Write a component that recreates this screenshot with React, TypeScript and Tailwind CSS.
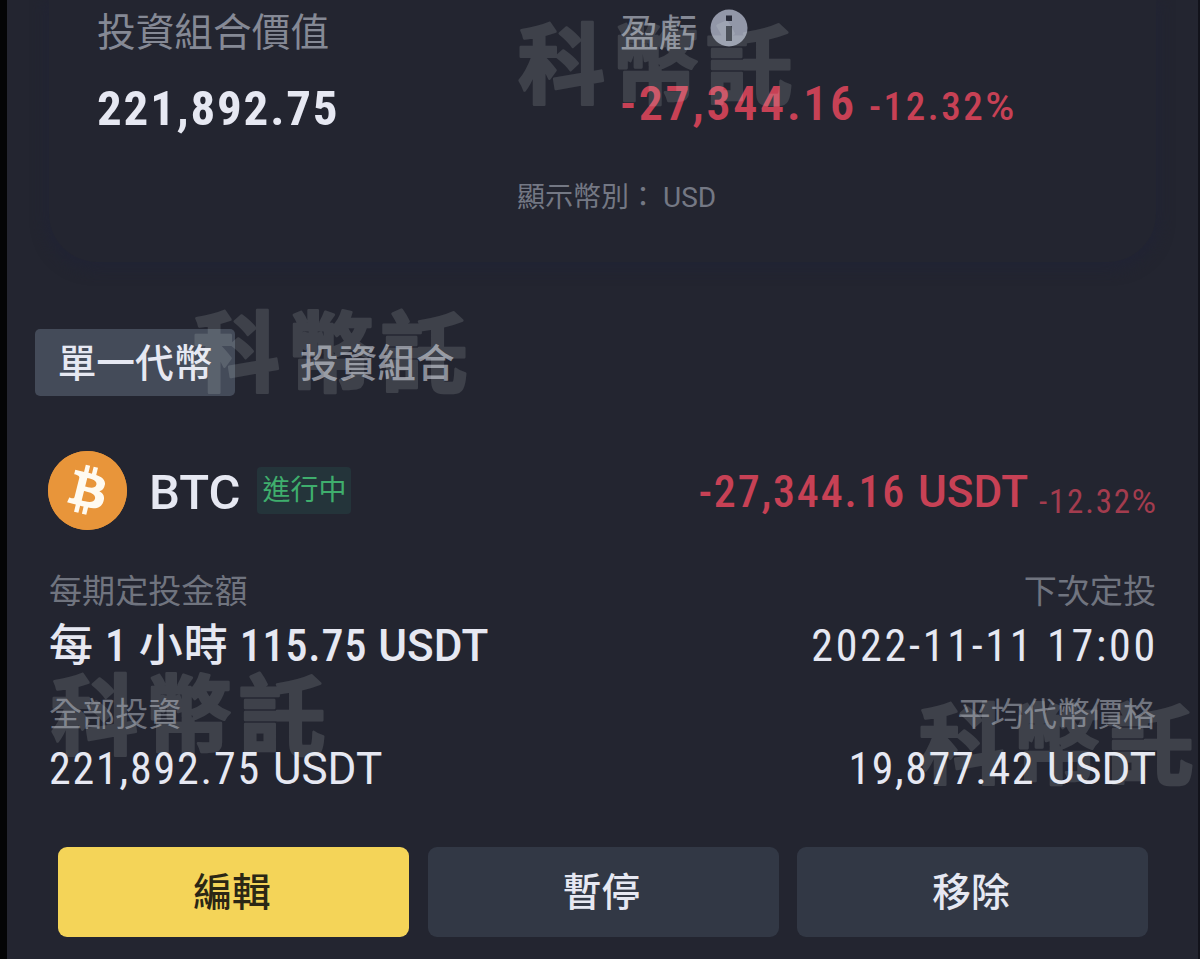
import type { ReactNode } from "react";
import clsx from "clsx";
import { SiBitcoin } from "react-icons/si";

function Watermark({ className }: { className: string }) {
  return (
    <svg
      className={clsx("pointer-events-none absolute h-[100px] w-[290px] overflow-visible opacity-[0.13]", className)}
      viewBox="0 0 290 100"
      aria-hidden="true"
    >
      <text
        x="7"
        y="81"
        fontSize="87"
        fontWeight="700"
        letterSpacing="7"
        fill="#f0fbf6"
        stroke="#f0fbf6"
        strokeWidth="2.6"
        strokeLinejoin="round"
      >
        科幣託
      </text>
    </svg>
  );
}

function InfoIcon() {
  return (
    <svg className="h-[38px] w-[38px]" viewBox="0 0 38 38" aria-hidden="true">
      <circle cx="19" cy="19" r="18.5" fill="#9297a8" />
      <rect x="16" y="6.5" width="6" height="5.5" fill="#272a37" />
      <rect x="16" y="17" width="6" height="15" fill="#343743" />
    </svg>
  );
}

// letters keep the normal width next to the narrow figures
function Unit({ children }: { children: ReactNode }) {
  return <span className="tracking-normal font-stretch-normal">{children}</span>;
}

function Label({ children }: { children: ReactNode }) {
  return <div className="flex h-[40px] items-center pt-[3px] text-[33.1px] text-[#70747f]">{children}</div>;
}

function Value({ children, className }: { children: ReactNode; className?: string }) {
  return (
    <div className={clsx("h-[50px] pt-[2px] text-[44px] leading-[48px] text-[#e6e8f2] font-stretch-[87%]", className)}>
      {children}
    </div>
  );
}

function Summary() {
  return (
    <section className="mx-[42px] h-[262px] rounded-b-[48px] text-[#858995] shadow-[0_4px_14px_4px_rgba(32,35,52,0.8)]">
      <div className="flex pl-[48px]">
        <div className="w-[523px]">
          <div className="flex h-[63px] items-center pt-[4px] text-[38.7px]">投資組合價值</div>
          <div className="flex h-[91px] items-center text-[49px] font-bold tracking-[1.8px] text-[#e6e8f2] font-stretch-[87%]">
            <span>221,892.75</span>
          </div>
        </div>
        <div>
          <div className="flex h-[63px] items-center gap-[13px] text-[38.7px]">
            <span className="mt-[5px]">盈虧</span>
            <span className="-mt-[7px]">
              <InfoIcon />
            </span>
          </div>
          <div className="flex h-[82px] items-center gap-[12px] text-[#c74155] font-stretch-[87%]">
            <span className="text-[48px] font-semibold tracking-[2.7px]">-27,344.16</span>
            <span className="mt-[6px] text-[39px] font-medium tracking-[2.6px]">
              -12.32<Unit>%</Unit>
            </span>
          </div>
        </div>
      </div>
      <div className="-mt-px flex h-[88px] items-center pl-[468px] pt-[2px] text-[28px] text-[#747884]">
        <span>顯示幣別：</span>
        <span className="ml-[6px]">USD</span>
      </div>
    </section>
  );
}

function Tabs() {
  return (
    <div className="mt-[67px] ml-[28px] flex h-[67px] text-[38.7px] font-medium">
      <button className="w-[200px] rounded-[5px] bg-[#444b59] pt-[4px] text-[#e6e8f2]">單一代幣</button>
      <button className="ml-[65px] pt-[4px] text-[#8b8e99]">投資組合</button>
    </div>
  );
}

function PlanHeader() {
  return (
    <div className="mt-[55px] flex h-[79px] items-center">
      <span className="-ml-px flex h-[79px] w-[79px] items-center justify-center rounded-full bg-[#e8953a]">
        <span className="flex h-[64px] w-[64px] items-center justify-center rounded-full bg-[#fffaf0]">
          <SiBitcoin className="h-[79px] w-[79px] shrink-0 text-[#e8953a]" />
        </span>
      </span>
      <span className="mt-[4px] ml-[22px] text-[49px] font-medium text-[#e6e8f2]">BTC</span>
      <span className="ml-[17px] flex h-[47px] w-[94px] items-center justify-center rounded-[4px] bg-[#24343a] text-[28px] text-[#3fae6d]">
        進行中
      </span>
      <span className="ml-auto flex items-baseline pt-[3px] text-[#c74155] font-stretch-[87%]">
        <span className="text-[44px] font-medium tracking-[1.8px]">
          -27,344.16 <Unit>USDT</Unit>
        </span>
        <span className="relative top-[6px] ml-[11px] text-[33px] tracking-[1.8px] text-[#a33c4e]">
          -12.32<Unit>%</Unit>
        </span>
      </span>
    </div>
  );
}

function Actions() {
  return (
    <div className="mt-[54px] ml-[9px] grid h-[90px] w-[1090px] grid-cols-3 gap-[18.5px] text-[38.7px] font-medium text-[#e6e8f2]">
      <button className="rounded-[9px] bg-[#f4d458] pt-[3px] pr-[3px] text-[#2b2715]">編輯</button>
      <button className="rounded-[9px] bg-[#323845] pt-[3px] pr-[3px]">暫停</button>
      <button className="rounded-[9px] bg-[#323845] pt-[3px] pr-[3px]">移除</button>
    </div>
  );
}

export default function App() {
  return (
    <main className="relative h-[959px] w-[1200px] overflow-hidden border-r-2 border-l-[7px] border-r-[#12131b] border-l-[#040506] bg-[#232530] font-['Roboto','Noto_Sans_CJK_TC',sans-serif] leading-none whitespace-nowrap">
      <Summary />
      <Tabs />
      <div className="mr-[42px] ml-[42px]">
        <PlanHeader />
        <div className="mt-[40px] flex justify-between">
          <div>
            <Label>每期定投金額</Label>
            <Value className="mt-[10px] font-medium tracking-[0.9px]">
              每 1 小時 115.75 <Unit>USDT</Unit>
            </Value>
          </div>
          <div className="flex flex-col items-end">
            <Label>下次定投</Label>
            <Value className="mt-[10px] -mr-[2px] tracking-[2.75px]">2022-11-11 17:00</Value>
          </div>
        </div>
        <div className="mt-[23px] flex justify-between">
          <div>
            <Label>全部投資</Label>
            <Value className="mt-[10px] tracking-[1.8px]">
              221,892.75 <Unit>USDT</Unit>
            </Value>
          </div>
          <div className="flex flex-col items-end">
            <Label>平均代幣價格</Label>
            <Value className="mt-[10px] tracking-[1.6px]">
              19,877.42 <Unit>USDT</Unit>
            </Value>
          </div>
        </div>
        <Actions />
      </div>
      <Watermark className="top-[16px] left-[504px]" />
      <Watermark className="top-[304px] left-[179px]" />
      <Watermark className="top-[667px] left-[37px]" />
      <Watermark className="top-[696px] left-[905px]" />
    </main>
  );
}
